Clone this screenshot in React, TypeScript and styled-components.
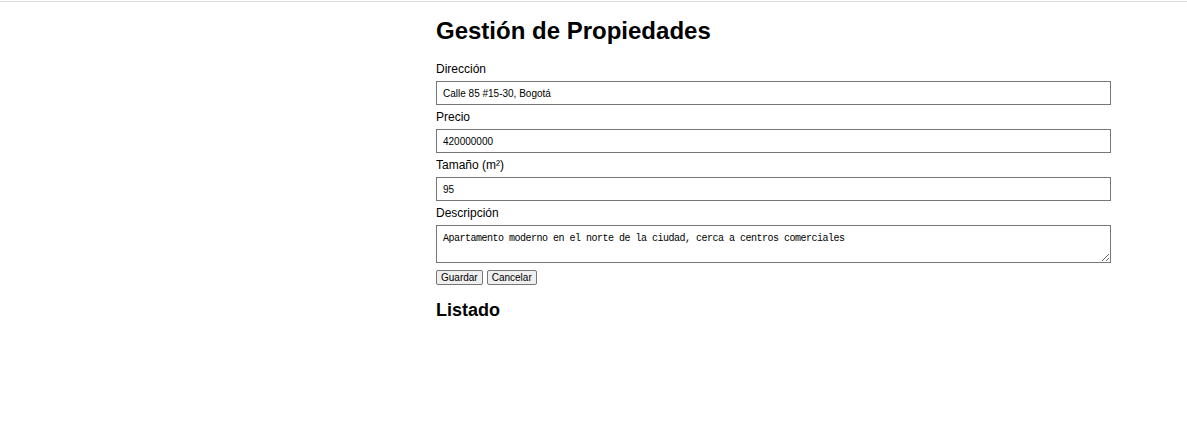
import React from "react";
import styled, { createGlobalStyle } from "styled-components";

const Global = createGlobalStyle`
  html, body { margin: 0; padding: 0; background: #fff; }
  body { font-family: "Liberation Sans", Arial, sans-serif; color: #000; }
`;

const TopRule = styled.div`
  margin-top: 1px;
  height: 1px;
  background: #dcdcdc;
`;

const Page = styled.main`
  display: grid;
  grid-template-columns: 436px 675px 1fr;
`;

const Content = styled.section`
  grid-column: 2;
  display: flex;
  flex-direction: column;
`;

const Title = styled.h1`
  margin: 15px 0 17px;
  font-size: 24px;
  line-height: 28px;
  font-weight: 700;
`;

const Form = styled.form`
  display: flex;
  flex-direction: column;
`;

const Label = styled.label<{ $first?: boolean }>`
  display: block;
  font-size: 12px;
  line-height: 14px;
  margin: ${(p) => (p.$first ? "0" : "5px")} 0 5px;
`;

const TextInput = styled.input`
  box-sizing: border-box;
  width: 100%;
  height: 24px;
  margin: 0;
  padding: 0 6px;
  border: 1px solid #767676;
  border-radius: 0;
  font-family: "Liberation Sans", Arial, sans-serif;
  font-size: 10px;
  color: #000;
  background: #fff;
  outline: none;
`;

const TextArea = styled.textarea`
  box-sizing: border-box;
  width: 100%;
  height: 38px;
  margin: 0;
  padding: 7px 6px 0;
  border: 1px solid #767676;
  border-radius: 0;
  font-family: "Liberation Mono", "DejaVu Sans Mono", monospace;
  font-size: 10px;
  letter-spacing: -0.5px;
  line-height: 12px;
  color: #000;
  background: #fff;
  resize: vertical;
  display: block;
`;

const Actions = styled.div`
  display: flex;
  gap: 4px;
  margin-top: 7px;
`;

const Button = styled.button`
  box-sizing: border-box;
  height: 15px;
  padding: 0 4px;
  margin: 0;
  border: 1px solid #767676;
  border-radius: 2px;
  background: #efefef;
  font-family: "Liberation Sans", Arial, sans-serif;
  font-size: 10px;
  line-height: 13px;
  color: #000;
`;

const SubTitle = styled.h2`
  margin: 15px 0 0;
  font-size: 18px;
  line-height: 21px;
  font-weight: 700;
`;

export default function App() {
  return (
    <>
      <Global />
      <TopRule />
      <Page>
        <Content>
          <Title>Gestión de Propiedades</Title>
          <Form onSubmit={(e) => e.preventDefault()}>
            <Label $first>Dirección</Label>
            <TextInput defaultValue="Calle 85 #15-30, Bogotá" />
            <Label>Precio</Label>
            <TextInput defaultValue="420000000" />
            <Label>Tamaño (m²)</Label>
            <TextInput defaultValue="95" />
            <Label>Descripción</Label>
            <TextArea defaultValue="Apartamento moderno en el norte de la ciudad, cerca a centros comerciales" />
            <Actions>
              <Button type="submit">Guardar</Button>
              <Button type="button">Cancelar</Button>
            </Actions>
          </Form>
          <SubTitle>Listado</SubTitle>
        </Content>
      </Page>
    </>
  );
}
